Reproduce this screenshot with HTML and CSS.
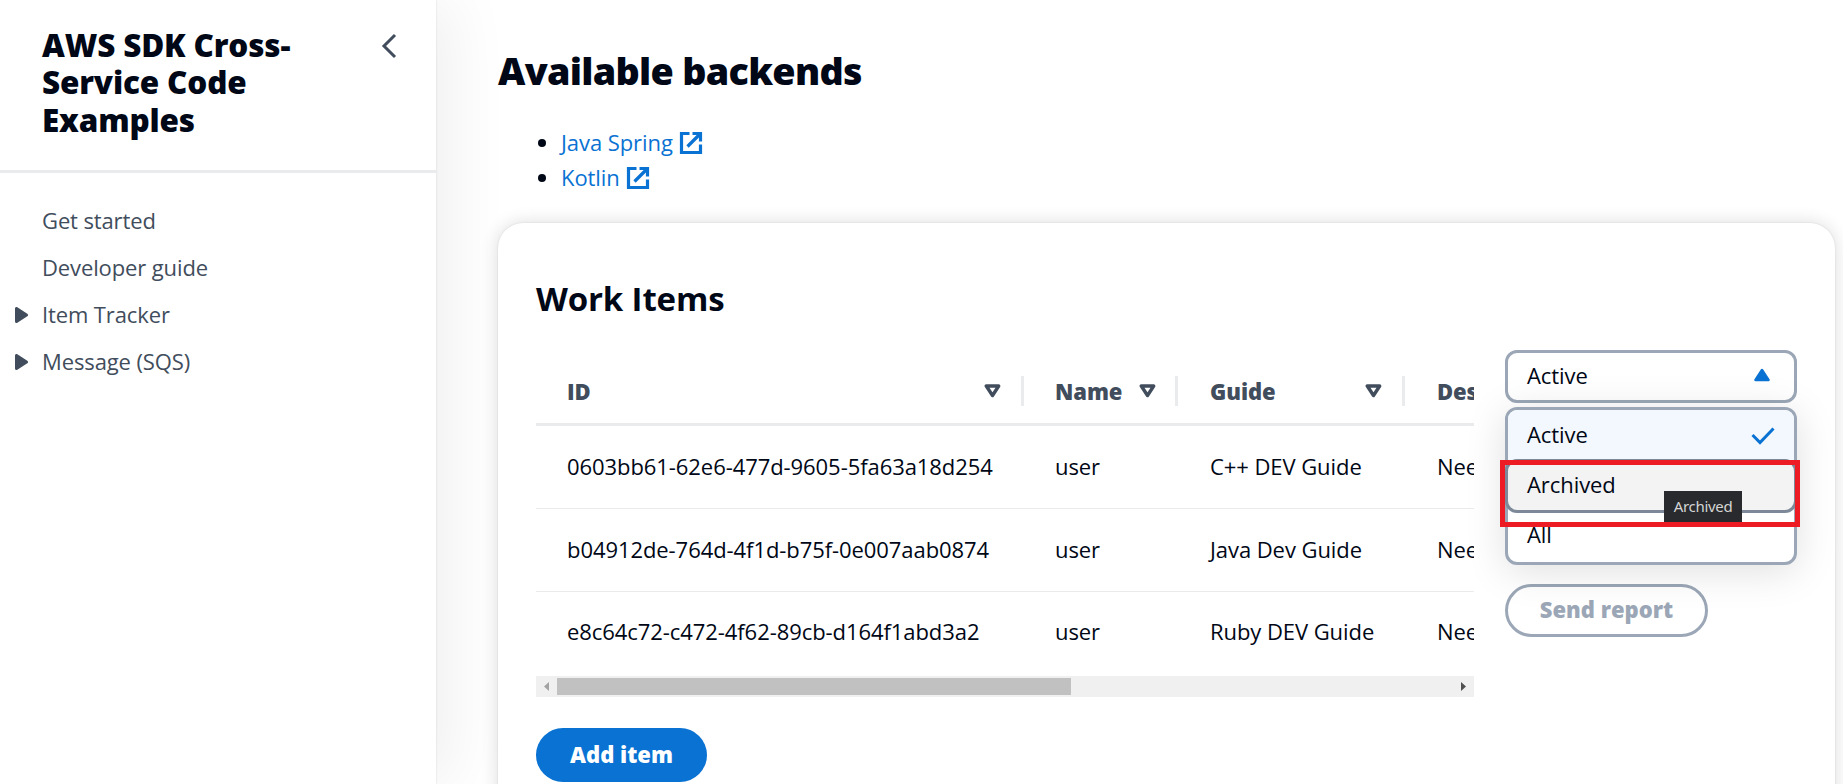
FILE: index.html
```html
<!DOCTYPE html>
<html lang="en">
<head>
<meta charset="utf-8">
<title>Work Items</title>
<link rel="stylesheet" href="styles.css">
</head>
<body>
<div class="layout">
  <aside class="sidebar">
    <header class="sidebar-header">
      <h2 class="sidebar-title">AWS SDK Cross-Service Code Examples</h2>
      <svg class="collapse" width="16" height="26" viewBox="0 0 16 26" fill="none" stroke="#414d5c" stroke-width="3"><path d="M14 2 3 13 14 24"/></svg>
    </header>
    <nav class="nav">
      <a class="nav-item"><span class="nav-arrow"></span>Get started</a>
      <a class="nav-item"><span class="nav-arrow"></span>Developer guide</a>
      <a class="nav-item"><span class="nav-arrow"><svg width="13" height="16" viewBox="0 0 13 16"><path d="M1.5 1.5v13L11.5 8z" fill="#414d5c" stroke="#414d5c" stroke-width="3" stroke-linejoin="round"/></svg></span>Item Tracker</a>
      <a class="nav-item"><span class="nav-arrow"><svg width="13" height="16" viewBox="0 0 13 16"><path d="M1.5 1.5v13L11.5 8z" fill="#414d5c" stroke="#414d5c" stroke-width="3" stroke-linejoin="round"/></svg></span>Message (SQS)</a>
    </nav>
  </aside>
  <main class="main">
    <h1 class="page-title">Available backends</h1>
    <ul class="backends">
      <li><a class="link">Java Spring<svg class="external" width="24" height="24" viewBox="0 0 24 24" fill="none" stroke="#0972d3" stroke-width="3.200"><path d="M10.500 2.500H2.500V21.500H21.500V13.500M13.500 2.500H21.500V10.500M21 3 8.500 15.500"/></svg></a></li>
      <li><a class="link">Kotlin<svg class="external" width="24" height="24" viewBox="0 0 24 24" fill="none" stroke="#0972d3" stroke-width="3.200"><path d="M10.500 2.500H2.500V21.500H21.500V13.500M13.500 2.500H21.500V10.500M21 3 8.500 15.500"/></svg></a></li>
    </ul>
    <section class="card">
      <h2 class="card-title">Work Items</h2>
      <div class="card-body">
        <div class="items">
          <div class="table">
            <div class="row head">
              <div class="cell"><span>ID</span><svg class="sort" width="17" height="14" viewBox="0 0 17 14"><path d="M2.300 2h12.400L8.500 11.500z" fill="none" stroke="#414d5c" stroke-width="3.400" stroke-linejoin="round"/></svg></div>
              <div class="cell"><span>Name</span><svg class="sort" width="17" height="14" viewBox="0 0 17 14"><path d="M2.300 2h12.400L8.500 11.500z" fill="none" stroke="#414d5c" stroke-width="3.400" stroke-linejoin="round"/></svg></div>
              <div class="cell"><span>Guide</span><svg class="sort" width="17" height="14" viewBox="0 0 17 14"><path d="M2.300 2h12.400L8.500 11.500z" fill="none" stroke="#414d5c" stroke-width="3.400" stroke-linejoin="round"/></svg></div>
              <div class="cell"><span>Des</span></div>
            </div>
            <div class="row"><div class="cell">0603bb61-62e6-477d-9605-5fa63a18d254</div><div class="cell">user</div><div class="cell">C++ DEV Guide</div><div class="cell">Nee</div></div>
            <div class="row"><div class="cell">b04912de-764d-4f1d-b75f-0e007aab0874</div><div class="cell">user</div><div class="cell">Java Dev Guide</div><div class="cell">Nee</div></div>
            <div class="row last"><div class="cell">e8c64c72-c472-4f62-89cb-d164f1abd3a2</div><div class="cell">user</div><div class="cell">Ruby DEV Guide</div><div class="cell">Nee</div></div>
          </div>
          <div class="scrollbar">
            <svg width="21" height="21" viewBox="0 0 21 21"><path d="M13 6v9L8 10.500z" fill="#a3a3a3"/></svg>
            <div class="thumb"></div>
            <svg width="21" height="21" viewBox="0 0 21 21"><path d="M8 6v9L13 10.500z" fill="#505050"/></svg>
          </div>
          <button class="button primary">Add item</button>
        </div>
        <div class="controls">
          <div class="select">
            <span>Active</span>
            <svg width="16" height="14" viewBox="0 0 16 14"><path d="M1.500 12 8 2l6.500 10z" fill="#0972d3" stroke="#0972d3" stroke-width="2.500" stroke-linejoin="round"/></svg>
            <div class="menu">
              <div class="option selected"><span>Active</span><svg class="check" width="24" height="18" viewBox="0 0 24 18" fill="none" stroke="#0972d3" stroke-width="3"><path d="M1.500 8 9 15.500 22.500 1.500"/></svg></div>
              <div class="option hovered"><span>Archived</span></div>
              <div class="option"><span>All</span></div>
              <div class="tooltip">Archived</div>
              <div class="highlight"></div>
            </div>
          </div>
          <button class="button disabled">Send report</button>
        </div>
      </div>
    </section>
  </main>
</div>
</body>
</html>
```
FILE: styles.css
```css
* { box-sizing: border-box; }
body {
  margin: 0;
  height: 784px;
  overflow: hidden;
  background: #fff;
  color: #000716;
  font: 22px/32px "Open Sans", sans-serif;
  letter-spacing: -.070px;
}
h1, h2, ul { margin: 0; }
svg { display: block; flex: none; }
.layout { display: flex; height: 784px; }
.sidebar {
  flex: none;
  width: 436px;
  box-shadow: 0 0 2px rgba(0, 7, 22, .12), 12px 0 62px rgba(0, 7, 22, .07);
}
.sidebar-header {
  display: flex;
  justify-content: space-between;
  height: 173px;
  padding: 25.500px 39px 0 42px;
  border-bottom: 3px solid #e9ebed;
}
.sidebar-title {
  width: 290px;
  font-size: 31.430px;
  line-height: 37.700px;
  font-weight: 800;
  letter-spacing: -.150px;
}
.collapse { margin-top: 7px; }
.nav { display: flex; flex-direction: column; gap: 15px; padding: 31px 0 0 15px; color: #414d5c; letter-spacing: -.120px; }
.nav-item { display: flex; align-items: center; }
.nav-arrow { width: 27px; flex: none; padding-top: 1px; }
.main { flex: none; width: 1407px; height: 784px; overflow: hidden; padding: 47px 8px 0 62px; }
.page-title { font-size: 37.700px; line-height: 47px; font-weight: 800; letter-spacing: -.700px; }
.backends { margin-top: 31px; padding-left: 63px; line-height: 35px; }
.link { display: inline-flex; align-items: center; gap: 6px; color: #0972d3; vertical-align: top; height: 35px; }
.card {
  height: 620px;
  margin-top: 28px;
  padding: 54px 38px 0;
  background: #fff;
  border-radius: 25px;
  box-shadow: 0 0 2px rgba(0, 7, 22, .12), 0 0 18px rgba(0, 7, 22, .14);
}
.card-title { font-size: 33px; line-height: 44px; font-weight: 700; letter-spacing: -.150px; }
.card-body { display: flex; gap: 31px; padding-top: 29px; }
.items { width: 938px; }
.table { overflow: hidden; padding-top: 9px; height: 326px; }
.row {
  display: grid;
  grid-template-columns: 488px 155px 227px 68px;
  align-items: center;
  height: 83px;
  border-bottom: 1px solid #e9ebed;
}
.row.last { height: 82px; border-bottom: 0; }
.cell { padding: 0 0 3px 31px; white-space: nowrap; overflow: hidden; }
.row.last .cell { padding-bottom: 4px; }
.row.head { height: 67px; border-bottom: 3px solid #e9ebed; color: #414d5c; font-weight: 800; grid-template-columns: 488px 155px 227px 68px; }
.head .cell { display: flex; align-items: center; justify-content: space-between; height: 30px; padding: 0 20px 0 31px; border-right: 3px solid #e9ebed; }
.head .cell:nth-child(2) { margin-right: 1px; padding-right: 19px; }
.head .cell:nth-child(3) { margin-right: 1px; }
.head .cell:last-child { border: 0; padding-right: 0; }
.scrollbar { display: flex; align-items: center; height: 21px; background: #f0f0f0; }
.thumb { width: 514px; height: 17px; margin-right: auto; background: #c1c1c1; }
.button { display: block; font: 800 22px/32px "Open Sans", sans-serif; border-radius: 28px; padding: 0; }
.primary { width: 171px; height: 54px; margin-top: 31px; border: 0; background: #0972d3; color: #fff; padding-bottom: 2px; }
.disabled { width: 203px; height: 53px; border: 3px solid #9ba7b6; background: transparent; color: #9ba7b6; padding-bottom: 3px; }
.controls { width: 292px; display: flex; flex-direction: column; gap: 181px; }
.select {
  position: relative;
  display: flex;
  align-items: center;
  justify-content: space-between;
  height: 53px;
  padding: 0 24px 3px 19px;
  border: 3px solid #9ba7b6;
  border-radius: 12px;
}
.menu {
  position: absolute;
  left: -3px;
  top: 54px;
  width: 292px;
  height: 158px;
  background: #fff;
  border: 3px solid #9ba7b6;
  border-radius: 12px;
  box-shadow: 0 6px 40px rgba(0, 7, 22, .13);
}
.option { display: flex; align-items: center; justify-content: space-between; height: 50px; padding: 0 19px 2px; }
.check { margin-top: 3px; }
.selected { background: #f2f8fd; border-radius: 9px 9px 0 0; }
.hovered { height: 54px; margin: -1px -3px -3px; padding: 0 19px 5px; background: #f3f3f3; border: 3px solid #7d8998; border-radius: 12px; }
.tooltip {
  position: absolute;
  left: 156px;
  top: 81px;
  width: 78px;
  height: 31px;
  background: #292a2d;
  color: #d5d5d5;
  font: 15px/31px "Noto Sans", sans-serif;
  letter-spacing: -.300px;
  text-align: center;
}
.highlight { position: absolute; left: -8px; top: 50px; width: 300px; height: 67px; border: 5px solid #ed1c24; }
```
